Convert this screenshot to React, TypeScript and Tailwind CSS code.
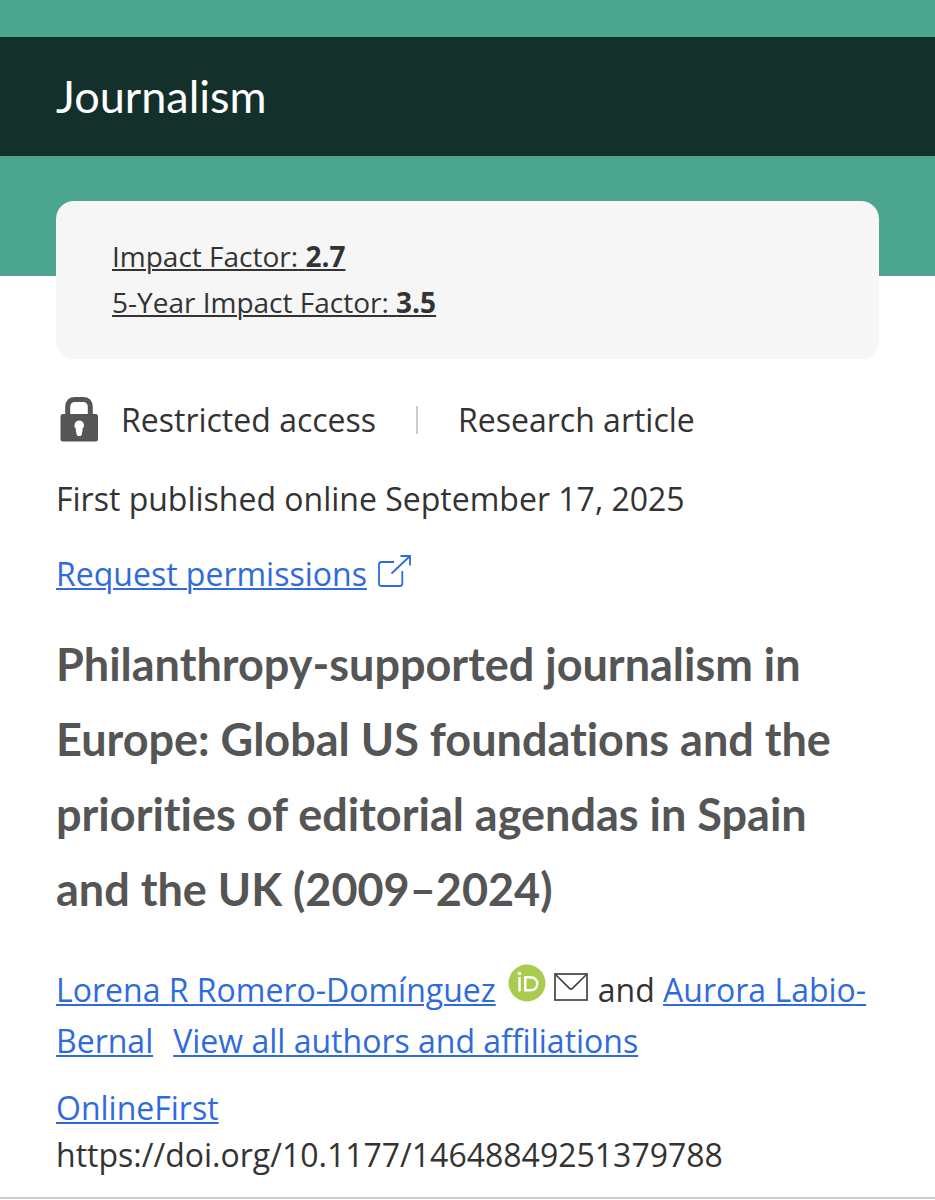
import type { ReactNode } from 'react';

interface TextLinkProps {
  href: string;
  children: ReactNode;
}

const metrics = [
  { id: 'impact', label: 'Impact Factor:', value: '2.7' },
  { id: 'impact-5y', label: '5-Year Impact Factor:', value: '3.5' },
];

export default function App() {
  return (
    <div className="min-h-screen bg-white font-['Open_Sans',sans-serif] text-[32px] leading-[47px] text-[#333333]">
      <header className="bg-[#4ca58f] pt-[37px] pb-[120px]">
        <div className="bg-[#14302b] px-14 pt-[29px] pb-[30px]">
          <a href="#journal" className="block font-['Lato',sans-serif] text-[45px] leading-[60px] text-white">
            Journalism
          </a>
        </div>
      </header>

      <main className="-mt-[75px]">
        <div className="px-14">
          <section className="flex flex-col items-start rounded-[18px] bg-[#f6f6f6] px-14 pt-8 pb-[34px] text-[28px] leading-[46px]">
            {metrics.map((metric) => (
              <a
                key={metric.id}
                href={`#${metric.id}`}
                className="underline decoration-2 underline-offset-2"
              >
                {metric.label} <strong className="font-bold">{metric.value}</strong>
              </a>
            ))}
          </section>

          <div className="mt-[37px] flex items-center">
            <LockIcon />
            <span className="ml-[22px]">Restricted access</span>
            <span className="mx-10 h-7 w-0.5 bg-[#cccccc]" />
            <span>Research article</span>
          </div>

          <p className="mt-8">First published online September 17, 2025</p>

          <div className="mt-7 flex items-center gap-2.5">
            <TextLink href="#permissions">Request permissions</TextLink>
            <ExternalIcon />
          </div>

          <h1 className="mt-[30px] font-['Lato',sans-serif] text-[45px] leading-[75px] font-bold text-[#555555] [font-variant-ligatures:none]">
            Philanthropy-supported journalism in Europe: Global US foundations and the priorities of
            editorial agendas in Spain and the UK (2009–2024)
          </h1>

          <div className="mt-[37px] leading-[51px]">
            <TextLink href="#author-1">Lorena R Romero-Domínguez</TextLink>
            <a href="#orcid" aria-label="ORCID profile" className="ml-3">
              <OrcidIcon />
            </a>
            <a href="#email" aria-label="Email the author" className="mr-2.5 ml-2">
              <MailIcon />
            </a>
            and <TextLink href="#author-2">Aurora Labio-&#8203;Bernal</TextLink>
            <span className="ml-5">
              <TextLink href="#authors">View all authors and affiliations</TextLink>
            </span>
          </div>

          <div className="mt-[18px]">
            <TextLink href="#online-first">OnlineFirst</TextLink>
            <p>https://doi.org/10.1177/14648849251379788</p>
          </div>
        </div>
        <hr className="mt-[19px] border-t-2 border-[#cccccc]" />
      </main>
    </div>
  );
}

function TextLink({ href, children }: TextLinkProps) {
  return (
    <a href={href} className="text-[#2f6bdc] underline decoration-2 underline-offset-2">
      {children}
    </a>
  );
}

const LockIcon = () => {
  return (
    <svg className="ml-1 h-[46px] w-[39px] shrink-0" viewBox="0 0 39 46" fill="none" aria-hidden="true">
      <path d="M7.7 18V10Q8 2.5 15 2.5h8q7 0 7.3 7.5v8" stroke="#555555" strokeWidth="5" />
      <rect x="0.5" y="17" width="37.5" height="27.5" rx="2.5" fill="#555555" />
      <path
        d="M19.2 23.5a4.8 4.8 0 0 0-2.6 8.8l-1 .2.9 3.9a2.7 2.7 0 0 0 5.4 0l.9-3.9-1-.2a4.8 4.8 0 0 0-2.6-8.8z"
        fill="white"
      />
    </svg>
  );
};

const ExternalIcon = () => {
  return (
    <svg
      className="h-[37px] w-[35px] shrink-0"
      viewBox="0 0 35 37"
      fill="none"
      stroke="#2f6bdc"
      strokeWidth="1.8"
      aria-hidden="true"
    >
      <path d="M17 7H4.5Q2 7 2 9.5v19Q2 31 4.5 31h18.3q2.5 0 2.5-2.5V16" />
      <path d="M14.5 18.5 33 1M23.5 1H33v9.5" />
    </svg>
  );
};

const OrcidIcon = () => {
  return (
    <svg className="inline h-[38px] w-[38px] align-baseline" viewBox="0 0 38 38" fill="none" aria-hidden="true">
      <circle cx="19" cy="19" r="18.5" fill="#a9cb50" />
      <circle cx="11.5" cy="9.5" r="1.8" fill="white" />
      <path d="M11.5 13v14.5" stroke="white" strokeWidth="2.4" />
      <path
        d="M17.3 13.2H22c4.8 0 7.3 3 7.3 6.6s-2.7 6.5-7.3 6.5h-4.7z"
        stroke="white"
        strokeWidth="2.4"
      />
    </svg>
  );
};

const MailIcon = () => {
  return (
    <svg
      className="mb-px inline h-7 w-[34px] align-baseline"
      viewBox="0 0 34 28"
      fill="none"
      stroke="#444444"
      strokeWidth="1.7"
      aria-hidden="true"
    >
      <rect x="1" y="1" width="32" height="26" />
      <path d="M1 1l14.5 14.3q1.5 1.4 3 0L33 1" />
    </svg>
  );
};
